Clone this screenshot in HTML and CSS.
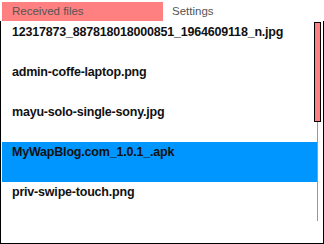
FILE: index.html
```html
<!DOCTYPE html>
<html>
<head>
<meta charset="utf-8">
<link rel="stylesheet" href="styles.css">
</head>
<body>
<div class="app">
  <div class="tabs">
    <div class="tab active">Received files</div>
    <div class="tab">Settings</div>
  </div>
  <div class="panel">
    <ul class="list">
      <li class="row">12317873_887818018000851_1964609118_n.jpg</li>
      <li class="row">admin-coffe-laptop.png</li>
      <li class="row">mayu-solo-single-sony.jpg</li>
      <li class="row selected">MyWapBlog.com_1.0.1_.apk</li>
      <li class="row">priv-swipe-touch.png</li>
    </ul>
    <div class="scrollbar">
      <div class="thumb"></div>
      <div class="track"></div>
    </div>
  </div>
</div>
</body>
</html>
```
FILE: styles.css
```css
* { box-sizing: border-box; }
html, body { margin: 0; padding: 0; background: #fff; }
body { font-family: "Liberation Sans", Arial, sans-serif; }
.app { width: 324px; height: 244px; display: flex; flex-direction: column; }
.tabs { height: 21px; display: flex; padding: 2px 0 0 2px; }
.tab { height: 19px; font-size: 11.5px; line-height: 18px; color: #555; padding-left: 10px; }
.tab.active { width: 161px; background: #ff8080; }
.tab:not(.active) { padding-left: 9px; }
.panel { flex: 1; position: relative; border: 1px solid #000; border-top: none; }
.list { list-style: none; margin: 1px 6px 0 1px; padding: 0; }
.row { height: 40px; padding: 3px 0 0 10px; font-size: 12.5px; line-height: 15px; letter-spacing: -0.2px; font-weight: bold; color: #111; white-space: nowrap; }
.row.selected { background: #0096ff; }
.scrollbar { position: absolute; top: 1px; right: 2px; width: 7px; display: flex; flex-direction: column; align-items: center; }
.thumb { width: 7px; height: 100px; background: #ff8080; border: 1px solid #000; }
.track { width: 1px; height: 99px; background: #999; }
```
